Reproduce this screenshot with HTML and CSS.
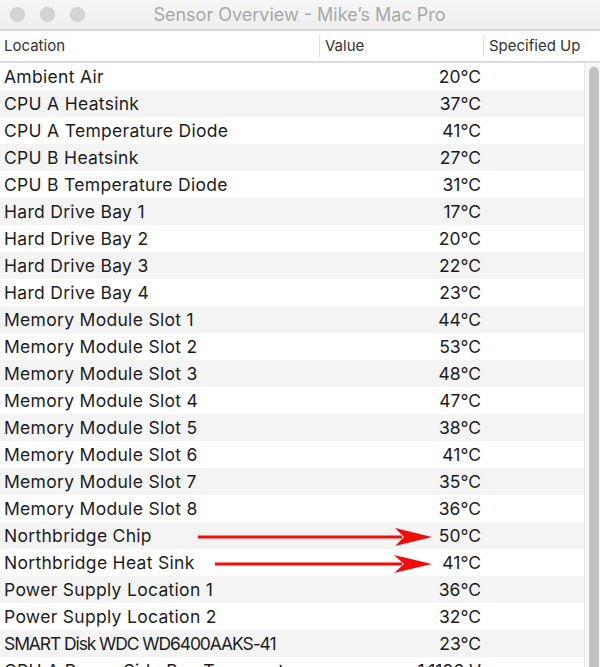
FILE: index.html
```html
<!DOCTYPE html>
<html>
<head>
<meta charset="utf-8">
<link rel="stylesheet" href="styles.css">
</head>
<body>
<div class="window">
  <div class="titlebar">
    <div class="lights"><span class="light"></span><span class="light"></span><span class="light"></span></div>
    <div class="title">Sensor Overview - Mike’s Mac Pro</div>
  </div>
  <div class="header">
    <div class="hcell">Location</div>
    <div class="hcell sep">Value</div>
    <div class="hcell sep">Specified Up</div>
  </div>
  <div class="content">
    <div class="table">
      <div class="row"><span class="loc">Ambient Air</span><span class="val">20°C</span><span></span></div>
      <div class="row"><span class="loc">CPU A Heatsink</span><span class="val">37°C</span><span></span></div>
      <div class="row"><span class="loc">CPU A Temperature Diode</span><span class="val">41°C</span><span></span></div>
      <div class="row"><span class="loc">CPU B Heatsink</span><span class="val">27°C</span><span></span></div>
      <div class="row"><span class="loc">CPU B Temperature Diode</span><span class="val">31°C</span><span></span></div>
      <div class="row"><span class="loc">Hard Drive Bay 1</span><span class="val">17°C</span><span></span></div>
      <div class="row"><span class="loc">Hard Drive Bay 2</span><span class="val">20°C</span><span></span></div>
      <div class="row"><span class="loc">Hard Drive Bay 3</span><span class="val">22°C</span><span></span></div>
      <div class="row"><span class="loc">Hard Drive Bay 4</span><span class="val">23°C</span><span></span></div>
      <div class="row"><span class="loc">Memory Module Slot 1</span><span class="val">44°C</span><span></span></div>
      <div class="row"><span class="loc">Memory Module Slot 2</span><span class="val">53°C</span><span></span></div>
      <div class="row"><span class="loc">Memory Module Slot 3</span><span class="val">48°C</span><span></span></div>
      <div class="row"><span class="loc">Memory Module Slot 4</span><span class="val">47°C</span><span></span></div>
      <div class="row"><span class="loc">Memory Module Slot 5</span><span class="val">38°C</span><span></span></div>
      <div class="row"><span class="loc">Memory Module Slot 6</span><span class="val">41°C</span><span></span></div>
      <div class="row"><span class="loc">Memory Module Slot 7</span><span class="val">35°C</span><span></span></div>
      <div class="row"><span class="loc">Memory Module Slot 8</span><span class="val">36°C</span><span></span></div>
      <div class="row"><span class="loc">Northbridge Chip</span><span class="val">50°C</span><span></span></div>
      <div class="row"><span class="loc">Northbridge Heat Sink</span><span class="val">41°C</span><span></span></div>
      <div class="row"><span class="loc">Power Supply Location 1</span><span class="val">36°C</span><span></span></div>
      <div class="row"><span class="loc">Power Supply Location 2</span><span class="val">32°C</span><span></span></div>
      <div class="row"><span class="loc smart">SMART Disk WDC WD6400AAKS-41</span><span class="val">23°C</span><span></span></div>
      <div class="row"><span class="loc">CPU A Power Side Bay Temperature</span><span class="val">1.1126 V</span><span></span></div>
    </div>
    <div class="scrollbar"><div class="thumb"></div></div>
  </div>
  <svg class="arrows" width="600" height="667" viewBox="0 0 600 667">
    <g fill="#f20d0d">
      <rect x="198" y="535.5" width="204" height="3"/>
      <polygon points="395,528 432,537 395,546 404,537"/>
      <rect x="215" y="562.5" width="187" height="3"/>
      <polygon points="394,555 432,564 394,573 404,564"/>
    </g>
  </svg>
</div>
</body>
</html>
```
FILE: styles.css
```css
html, body {
  margin: 0;
  padding: 0;
  background: #ffffff;
}
.window {
  position: relative;
  width: 600px;
  height: 667px;
  overflow: hidden;
  font-family: Inter, "Liberation Sans", sans-serif;
  color: #1c1c1c;
}
.titlebar {
  height: 29px;
  background: linear-gradient(#f6f6f6, #eeeeee);
  border-bottom: 2px solid #d6d6d6;
  display: flex;
  align-items: center;
  position: relative;
}
.lights {
  display: flex;
  gap: 15px;
  padding-left: 10px;
}
.light {
  width: 13px;
  height: 13px;
  border-radius: 50%;
  background: #d4d4d4;
  border: 1px solid #cbcbcb;
}
.title {
  flex: 1;
  text-align: center;
  font-size: 18px;
  color: #a8a8a8;
  margin-left: -86px;
}
.header {
  display: grid;
  grid-template-columns: 319px 164px 1fr;
  height: 30px;
  align-items: center;
  border-bottom: 2px solid #dcdcdc;
  font-size: 15px;
  color: #333333;
}
.hcell {
  padding-left: 4px;
  height: 22px;
  line-height: 22px;
}
.hcell.sep {
  border-left: 1px solid #dedede;
  padding-left: 5px;
}
.content {
  display: flex;
}
.table {
  width: 584px;
  border-right: 1px solid #e6e6e6;
}
.row {
  display: grid;
  grid-template-columns: 320px 161px 1fr;
  height: 27px;
  align-items: center;
  font-size: 17.5px;
}
.row:nth-child(even) {
  background: #f4f4f4;
}
.loc {
  padding-left: 4px;
  white-space: nowrap;
  letter-spacing: 0.3px;
}
.loc.smart {
  letter-spacing: -1.1px;
}
.val {
  text-align: right;
}
.scrollbar {
  flex: 1;
  background: #f7f7f7;
  padding: 4px 1px 0 4px;
}
.thumb {
  height: 700px;
  background: #c2c2c2;
  border-radius: 5px;
}
.arrows {
  position: absolute;
  left: 0;
  top: 0;
  pointer-events: none;
}
```
